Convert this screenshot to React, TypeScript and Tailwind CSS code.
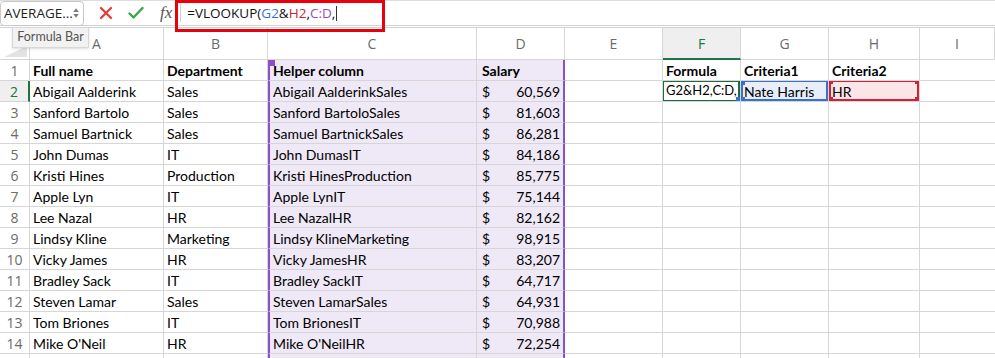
import React from 'react';

const cols = [30, 134, 104, 209, 88, 98, 78, 88, 91];
const letters = ['A', 'B', 'C', 'D', 'E', 'F', 'G', 'H', 'I'];

const people: [string, string, string][] = [
  ['Abigail Aalderink', 'Sales', '60,569'],
  ['Sanford Bartolo', 'Sales', '81,603'],
  ['Samuel Bartnick', 'Sales', '86,281'],
  ['John Dumas', 'IT', '84,186'],
  ['Kristi Hines', 'Production', '85,775'],
  ['Apple Lyn', 'IT', '75,144'],
  ['Lee Nazal', 'HR', '82,162'],
  ['Lindsy Kline', 'Marketing', '98,915'],
  ['Vicky James', 'HR', '83,207'],
  ['Bradley Sack', 'IT', '64,717'],
  ['Steven Lamar', 'Sales', '64,931'],
  ['Tom Briones', 'IT', '70,988'],
  ['Mike O\'Neil', 'HR', '72,254'],
];

const cellFont = { fontFamily: 'Lato, "Open Sans", sans-serif' };

function Corner({ pos, color }: { pos: string; color: string }) {
  return <span className={`absolute w-[6px] h-[6px] ${pos} ${color}`} />;
}

function Cell({
  w,
  size = 'text-[14px]',
  className = '',
  children,
}: {
  w: number;
  size?: string;
  className?: string;
  children?: React.ReactNode;
}) {
  return (
    <div
      style={{ width: w }}
      className={`relative shrink-0 h-[21px] border-r border-b border-[#d6d6d6] flex items-center overflow-hidden whitespace-nowrap text-black ${size} ${className}`}
    >
      {children}
    </div>
  );
}

function RowNum({ n, active }: { n?: number; active?: boolean }) {
  return (
    <div
      className={`shrink-0 w-[30px] h-[21px] border-b border-[#d6d6d6] flex items-center justify-center text-[14px] ${
        active ? 'bg-[#efefef] text-[#217346] border-r-2 border-r-[#217346]' : 'text-[#6b6b6b] border-r'
      }`}
      style={{ fontFamily: '"Open Sans", sans-serif' }}
    >
      {n}
    </div>
  );
}

export default function App() {
  return (
    <div className="relative w-[995px] h-[358px] overflow-hidden bg-white" style={cellFont}>
      {/* formula bar */}
      <div className="h-[28px] flex items-center border-t border-[#dedede] border-b-[3px] border-b-[#d2d2d2] border-double">
        <div className="ml-0 w-[84px] h-[25px] border border-[#c9c9c9] rounded-sm flex items-center justify-between pl-[3px] pr-[4px]">
          <span className="text-[13.5px] text-[#222]" style={{ fontFamily: '"Open Sans", sans-serif' }}>AVERAGE...</span>
          <svg width="9" height="16" viewBox="0 0 9 16">
            <path d="M4.5 1 L8.5 6.5 H0.5 Z" fill="#7a7a7a" />
            <path d="M4.5 15 L8.5 9.5 H0.5 Z" fill="#7a7a7a" />
          </svg>
        </div>
        <svg className="ml-[15px]" width="14" height="14" viewBox="0 0 14 14">
          <path d="M2 2 L12 12 M12 2 L2 12" stroke="#e53a3a" strokeWidth="2.2" strokeLinecap="round" />
        </svg>
        <svg className="ml-[15px]" width="16" height="14" viewBox="0 0 16 14">
          <path d="M1.5 7.5 L5.5 11.5 L14.5 2" stroke="#3aa64a" strokeWidth="2.4" fill="none" strokeLinecap="round" strokeLinejoin="round" />
        </svg>
        <span className="ml-[16px] text-[17px] italic text-[#555]" style={{ fontFamily: '"Liberation Serif", serif' }}>fx</span>
        <span className="ml-[8px] w-px h-[18px] bg-[#cfcfcf]" />
        <span className="ml-[6px] text-[13.5px] text-[#111] flex items-center" style={{ fontFamily: '"Open Sans", sans-serif' }}>
          =VLOOKUP(<span className="text-[#3a6fd0]">G2</span>&amp;<span className="text-[#cc2338]">H2</span>,<span className="text-[#8c4fc7]">C:D</span>,
          <span className="ml-[1px] w-px h-[15px] bg-[#333]" />
        </span>
      </div>

      {/* column header */}
      <div className="flex h-[32px]">
        <div className="shrink-0 w-[30px] h-[32px] border-r border-b border-[#d6d6d6] flex items-end justify-end p-[2px]">
          <svg width="23" height="11" viewBox="0 0 23 11">
            <path d="M23 0 V11 H0 Z" fill="#e3e3e3" />
          </svg>
        </div>
        {letters.map((l, i) => (
          <div
            key={l}
            style={{ width: cols[i + 1] ?? 75, fontFamily: '"Open Sans", sans-serif' }}
            className={`shrink-0 h-[32px] border-r border-[#d6d6d6] flex items-center justify-center text-[14px] ${
              l === 'F' ? 'bg-[#efefef] text-[#217346] border-b-2 border-b-[#217346]' : 'text-[#6b6b6b] border-b'
            }`}
          >
            {l}
          </div>
        ))}
        <div className="flex-1 border-b border-[#d6d6d6]" />
      </div>

      {/* row 1 */}
      <div className="flex">
        <RowNum n={1} />
        <Cell w={134} className="pl-[3px] font-bold">Full name</Cell>
        <Cell w={104} className="pl-[3px] font-bold">Department</Cell>
        <Cell w={209} className="pl-[3px] font-bold bg-[#efe8f6] border-l-2 border-l-[#8c4fc7]">
          Helper column
          <Corner pos="-left-[1px] top-0" color="bg-[#8c4fc7]" />
        </Cell>
        <Cell w={88} className="pl-[5px] font-bold bg-[#efe8f6] border-r-2 border-r-[#8c4fc7]">Salary</Cell>
        <Cell w={98} />
        <Cell w={78} className="pl-[3px] font-bold">Formula</Cell>
        <Cell w={88} className="pl-[3px] font-bold">Criteria1</Cell>
        <Cell w={91} className="pl-[3px] font-bold">Criteria2</Cell>
        <div className="flex-1 h-[21px] border-b border-[#d6d6d6]" />
      </div>

      {people.map(([name, dept, salary], idx) => {
        const r = idx + 2;
        return (
          <div key={r} className="flex">
            <RowNum n={r} active={r === 2} />
            <Cell w={134} className="pl-[3px]">{name}</Cell>
            <Cell w={104} className="pl-[3px]">{dept}</Cell>
            <Cell w={209} className="pl-[3px] bg-[#efe8f6] border-l-2 border-l-[#8c4fc7]">{name + dept}</Cell>
            <Cell w={88} className="pl-[5px] pr-[3px] justify-between bg-[#efe8f6] border-r-2 border-r-[#8c4fc7]">
              <span>$</span>
              <span>{salary}</span>
            </Cell>
            <Cell w={98} />
            {r === 2 ? (
              <>
                <Cell w={78} size="text-[13px]" className="pl-[3px]">
                  G2&amp;H2,C:D,
                  <span className="absolute -inset-y-[1px] -left-[1px] right-0 border-2 border-[#1d6b40]" />
                  <Corner pos="-right-[2px] -bottom-[2px]" color="bg-[#3a6fd0]" />
                </Cell>
                <Cell w={88} className="pl-[3px] bg-[#e8eef9]">
                  Nate Harris
                  <span className="absolute -top-[1px] bottom-0 left-0 right-0 border-2 border-[#3a6fd0]" />
                  <Corner pos="-left-[2px] -top-[2px]" color="bg-[#3a6fd0]" />
                  <Corner pos="-left-[2px] -bottom-[2px]" color="bg-[#3a6fd0]" />
                </Cell>
                <Cell w={91} className="pl-[3px] bg-[#fbe5e7]">
                  HR
                  <span className="absolute -top-[1px] bottom-0 left-0 right-0 border-2 border-[#cc2338]" />
                  <Corner pos="-left-[2px] -top-[3px]" color="bg-[#cc2338]" />
                  <Corner pos="-right-[2px] -top-[3px]" color="bg-[#cc2338]" />
                  <Corner pos="-left-[2px] -bottom-[2px]" color="bg-[#cc2338]" />
                  <Corner pos="-right-[2px] -bottom-[2px]" color="bg-[#cc2338]" />
                </Cell>
              </>
            ) : (
              <>
                <Cell w={78} />
                <Cell w={88} />
                <Cell w={91} />
              </>
            )}
            <div className="flex-1 h-[21px] border-b border-[#d6d6d6]" />
          </div>
        );
      })}

      <div className="flex">
        <RowNum />
        <Cell w={134} />
        <Cell w={104} />
        <Cell w={209} className="bg-[#efe8f6] border-l-2 border-l-[#8c4fc7]" />
        <Cell w={88} className="bg-[#efe8f6] border-r-2 border-r-[#8c4fc7]" />
        <Cell w={98} />
        <Cell w={78} />
        <Cell w={88} />
        <Cell w={91} />
      </div>

      {/* annotation & tooltip overlays */}
      <div className="absolute left-[175px] top-0 w-[210px] h-[32px] border-[3px] border-[#e8000b]" />
      <div className="absolute left-[12px] top-[27px] w-[77px] h-[21px] bg-[#f2f2f2] border border-[#d8d8d8] shadow-sm flex items-center justify-center text-[12.5px] text-[#555]">
        Formula Bar
      </div>
    </div>
  );
}
